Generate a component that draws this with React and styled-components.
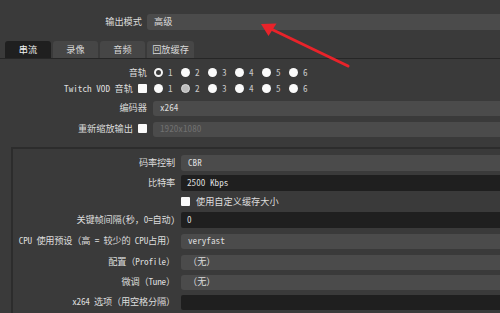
import React from 'react';
import styled, {createGlobalStyle} from 'styled-components';

const Global = createGlobalStyle`
    html, body {
        margin: 0;
        padding: 0;
        background: #3a3a3a;
    }
`

const tracks = [1, 2, 3, 4, 5, 6];

function Radios({checked, greyed}) {
    return (
        <RadioGroup>
            {tracks.map((n) => (
                <Opt key={n}>
                    <Radio $checked={n === checked} $grey={n === greyed} />
                    <Digit>{n}</Digit>
                </Opt>
            ))}
        </RadioGroup>
    );
}

export default function App() {
    return (
        <Page>
            <Global />
            <TopRow>
                <TopLabel>输出模式</TopLabel>
                <Combo>高级</Combo>
            </TopRow>

            <TabBar>
                <Tab $active $w={46}>串流</Tab>
                <Tab $w={45}>录像</Tab>
                <Tab $w={45}>音频</Tab>
                <Tab $w={47}>回放缓存</Tab>
            </TabBar>

            <Pane>
                <Row $h={17}>
                    <Label>音轨</Label>
                    <Radios checked={1} />
                </Row>
                <Row $h={16}>
                    <Label>Twitch VOD 音轨<Check /></Label>
                    <Radios greyed={2} />
                </Row>
                <Row $h={22}>
                    <Label>编码器</Label>
                    <Combo $h={15}>x264</Combo>
                </Row>
                <Row $h={20}>
                    <Label>重新缩放输出<Check /></Label>
                    <Combo $h={15} $disabled>1920x1080</Combo>
                </Row>

                <Group>
                    <Row $h={20}>
                        <GroupLabel>码率控制</GroupLabel>
                        <Combo>CBR</Combo>
                    </Row>
                    <Row $h={20}>
                        <GroupLabel>比特率</GroupLabel>
                        <Input>2500 Kbps</Input>
                    </Row>
                    <Row $h={17}>
                        <GroupLabel></GroupLabel>
                        <CheckLine><Check />使用自定义缓存大小</CheckLine>
                    </Row>
                    <Row $h={20}>
                        <GroupLabel>关键帧间隔(秒，0=自动)</GroupLabel>
                        <Input>0</Input>
                    </Row>
                    <Row $h={22}>
                        <GroupLabel>CPU 使用预设（高 = 较少的 CPU占用）</GroupLabel>
                        <Combo $h={15}>veryfast</Combo>
                    </Row>
                    <Row $h={20}>
                        <GroupLabel>配置（Profile）</GroupLabel>
                        <Combo $h={15}>（无）</Combo>
                    </Row>
                    <Row $h={20}>
                        <GroupLabel>微调（Tune）</GroupLabel>
                        <Combo $h={15}>（无）</Combo>
                    </Row>
                    <Row $h={20}>
                        <GroupLabel>x264 选项（用空格分隔）</GroupLabel>
                        <Input $h={15}></Input>
                    </Row>
                </Group>
            </Pane>

            <Arrow width="500" height="313" viewBox="0 0 500 313">
                <line x1="348" y1="66" x2="270" y2="28.5" stroke="#e8232a" strokeWidth="3" strokeLinecap="round" />
                <polygon points="261,24 276.5,23.5 268.5,36" fill="#e8232a" />
            </Arrow>
        </Page>
    );
}

const Page = styled.div`
    position: relative;
    width: 500px;
    height: 313px;
    overflow: hidden;
    background: #3a3a3a;
    color: #dcdcdc;
    font-family: "Noto Sans Mono CJK SC", "Noto Sans CJK SC", sans-serif;
    font-size: 9.2px;
    line-height: 1;
`

const TopRow = styled.div`
    display: flex;
    align-items: center;
    gap: 5px;
    height: 15px;
    padding-top: 14px;
`

const TopLabel = styled.div`
    width: 142px;
    text-align: right;
    flex-shrink: 0;
`

const Combo = styled.div`
    flex: 1;
    height: ${(p) => p.$h || 16}px;
    margin-right: -6px;
    display: flex;
    align-items: center;
    padding-left: 7px;
    background: #4b4b4b;
    border-radius: 3px;
    color: ${(p) => (p.$disabled ? '#707070' : '#dcdcdc')};
`

const Input = styled.div`
    flex: 1;
    height: ${(p) => p.$h || 16}px;
    margin-right: -6px;
    display: flex;
    align-items: center;
    padding-left: 6px;
    background: #1f1f1f;
    border-radius: 2px;
`

const TabBar = styled.div`
    display: flex;
    gap: 2px;
    margin-top: 12px;
    padding-left: 5px;
    height: 17px;
    border-bottom: 1px solid #262626;
`

const Tab = styled.div`
    width: ${(p) => p.$w}px;
    display: flex;
    align-items: center;
    justify-content: center;
    background: ${(p) => (p.$active ? '#1f1f1f' : '#464646')};
    border-radius: 3px 3px 0 0;
    color: ${(p) => (p.$active ? '#f0f0f0' : '#d8d8d8')};
`

const Pane = styled.div`
    padding-top: 5px;
`

const Row = styled.div`
    display: flex;
    align-items: center;
    gap: 5px;
    height: ${(p) => p.$h}px;
`

const Label = styled.div`
    width: 148px;
    flex-shrink: 0;
    display: flex;
    align-items: center;
    justify-content: flex-end;
    gap: 5px;
    white-space: nowrap;
    padding-right: 1px;
    box-sizing: border-box;
`

const GroupLabel = styled(Label)`
    width: 163px;
    letter-spacing: -0.2px;
`

const Check = styled.span`
    display: inline-block;
    width: 9px;
    height: 9px;
    background: #fafafa;
    border-radius: 1px;
    flex-shrink: 0;
`

const CheckLine = styled.div`
    display: flex;
    align-items: center;
    gap: 6px;
`

const RadioGroup = styled.div`
    display: flex;
    padding-left: 1px;
`

const Opt = styled.div`
    width: 27px;
    display: flex;
    align-items: center;
    gap: 5px;
`

const Radio = styled.span`
    width: 9px;
    height: 9px;
    border-radius: 50%;
    box-sizing: border-box;
    background: ${(p) => (p.$checked ? '#3a3a3a' : p.$grey ? '#bcbcbc' : '#fafafa')};
    border: ${(p) => (p.$checked ? '2px solid #f4f4f4' : p.$grey ? '1px solid #dadada' : 'none')};
`

const Digit = styled.span`
    color: #c8c8c8;
`

const Group = styled.div`
    margin-top: 8px;
    margin-left: 11px;
    border-top: 2px solid #2c2c2c;
    border-left: 2px solid #2c2c2c;
    padding-top: 4px;
    height: 200px;
`

const Arrow = styled.svg`
    position: absolute;
    left: 0;
    top: 0;
    pointer-events: none;
`
